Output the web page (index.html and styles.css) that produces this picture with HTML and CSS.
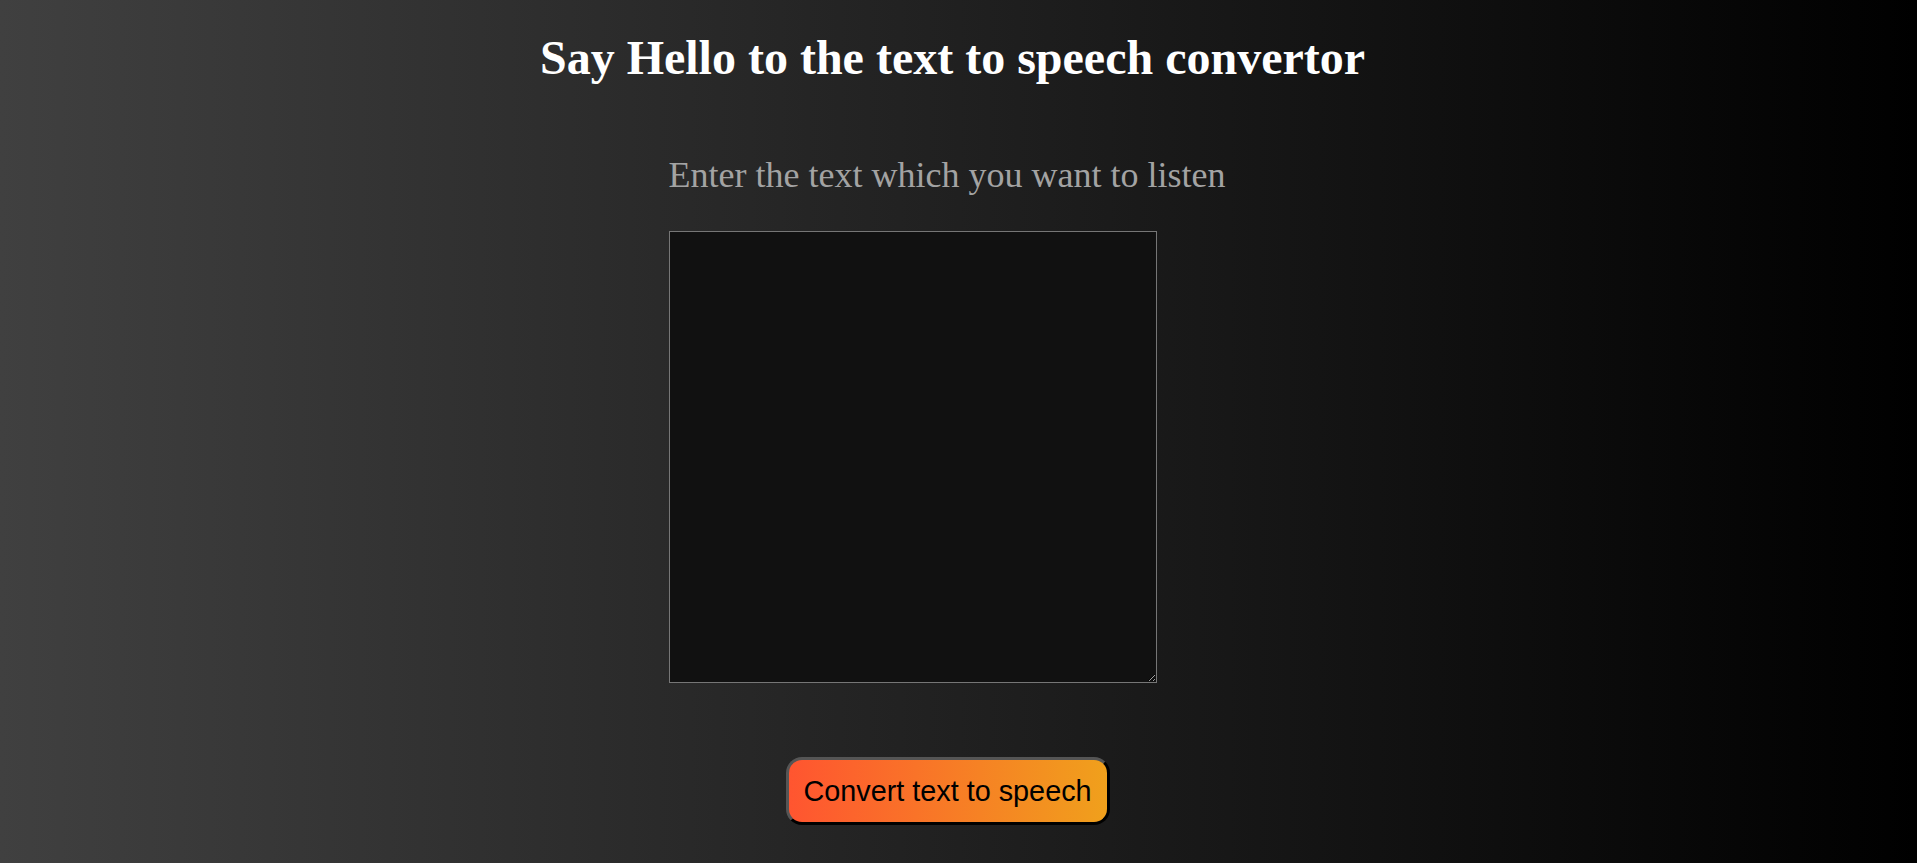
FILE: index.html
```html
<!DOCTYPE html>
<html lang="en">
<head>
<meta charset="utf-8">
<title>Text to speech</title>
<link rel="stylesheet" href="styles.css">
</head>
<body>
<main class="page">
  <h1 class="title">Say Hello to the text to speech convertor</h1>
  <section class="field">
    <label class="label" for="txt">Enter the text which you want to listen</label>
    <textarea class="input" id="txt"></textarea>
    <button class="convert" type="button">Convert text to speech</button>
  </section>
</main>
</body>
</html>
```
FILE: styles.css
```css
html, body {
  margin: 0;
  padding: 0;
}
body {
  min-height: 100vh;
  background: linear-gradient(to right, #404040, #000000);
  font-family: "Liberation Serif", "Times New Roman", serif;
}
.page {
  display: flex;
  flex-direction: column;
  align-items: center;
  padding-top: 30px;
}
.title {
  margin: 0 12px 0 0;
  color: #ffffff;
  font-size: 48px;
  font-weight: bold;
  line-height: 56px;
}
.field {
  width: 580px;
  display: flex;
  flex-direction: column;
  align-items: flex-start;
  margin-top: 68px;
}
.label {
  color: #a3a3a3;
  font-size: 36px;
  line-height: 42px;
}
.input {
  box-sizing: border-box;
  width: 488px;
  height: 452px;
  margin-top: 35px;
  background: #111111;
  border: 1px solid #767676;
  color: #ffffff;
}
.convert {
  box-sizing: border-box;
  width: 324px;
  height: 68px;
  margin: 74px 0 0 117px;
  border-style: solid;
  border-width: 3px;
  border-color: #555555 #000000 #000000 #555555;
  border-radius: 16px;
  background: linear-gradient(to right, #ff5530, #f0a01c);
  color: #000000;
  font-family: "Liberation Sans", Arial, sans-serif;
  font-size: 28.8px;
  padding: 0;
}
```
